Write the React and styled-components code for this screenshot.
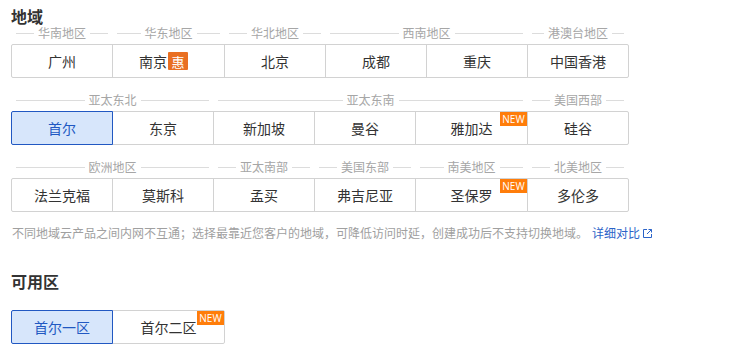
import React from 'react';
import styled, { createGlobalStyle, css } from 'styled-components';

const GlobalStyle = createGlobalStyle`
  body {
    margin: 0;
    background: #fff;
    font-family: "Noto Sans CJK SC", "Noto Sans", sans-serif;
    color: #333;
  }
`;

const Page = styled.div`
  padding: 5px 0 0 12px;
`;

const Title = styled.div`
  font-size: 16px;
  font-weight: 700;
  line-height: 22px;
  color: #333;
  margin-left: -1px;
`;

const RegionRow = styled.div`
  display: flex;
  margin-bottom: 16px;
`;

const Group = styled.div`
  display: flex;
  flex-direction: column;
`;

const GroupLabel = styled.div`
  display: flex;
  align-items: center;
  gap: 4px;
  height: 12px;
  line-height: 12px;
  padding: 0 5px 0 4px;
  margin-bottom: 5px;
  font-size: 12px;
  color: #a6a6a6;
  white-space: nowrap;

  &::before,
  &::after {
    content: '';
    flex: 1;
    border-top: 1px solid #dcdcdc;
  }
`;

const Cells = styled.div`
  display: flex;
`;

const Cell = styled.div`
  position: relative;
  box-sizing: border-box;
  width: ${(p) => p.$w}px;
  height: 34px;
  margin-left: -1px;
  display: flex;
  align-items: center;
  justify-content: center;
  font-size: 14px;
  color: #333;
  background: #fff;
  border: 1px solid #d2d2d2;
  ${(p) =>
    p.$active &&
    css`
      z-index: 1;
      background: #d7e6fb;
      border-color: #2158c2;
      color: #2158c2;
    `}
  ${(p) => p.$first && css`border-radius: 2px 0 0 2px;`}
  ${(p) => p.$last && css`border-radius: 0 2px 2px 0;`}
`;

const Hui = styled.span`
  display: inline-flex;
  align-items: center;
  justify-content: center;
  width: 20px;
  height: 18px;
  margin: 0 10px 0 1px;
  background: #e96f22;
  color: #fff;
  font-size: 13px;
  border-radius: 1px;
`;

const NewBadge = styled.span`
  position: absolute;
  top: 0;
  right: 0;
  width: 27px;
  height: 14px;
  background: #ff7d0a;
  color: #fff;
  font-family: "Open Sans", "Liberation Sans", sans-serif;
  font-size: 10px;
  line-height: 14px;
  text-align: center;
`;

const Note = styled.div`
  margin-top: -4px;
  font-size: 12px;
  line-height: 18px;
  color: #a0a0a0;
  display: flex;
  align-items: center;
`;

const Link = styled.a`
  margin-left: 4px;
  color: #2b63c8;
  text-decoration: none;
  display: inline-flex;
  align-items: center;
  gap: 3px;
`;

const SubTitle = styled(Title)`
  margin-top: 28px;
`;

const ZoneRow = styled(Cells)`
  margin-top: 18px;
`;

const rows = [
  [
    { label: '华南地区', cells: [{ name: '广州' }] },
    { label: '华东地区', cells: [{ name: '南京', hui: true }] },
    { label: '华北地区', cells: [{ name: '北京' }] },
    { label: '西南地区', cells: [{ name: '成都' }, { name: '重庆' }] },
    { label: '港澳台地区', cells: [{ name: '中国香港' }] },
  ],
  [
    { label: '亚太东北', cells: [{ name: '首尔', active: true }, { name: '东京' }] },
    {
      label: '亚太东南',
      cells: [{ name: '新加坡' }, { name: '曼谷' }, { name: '雅加达', isNew: true }],
    },
    { label: '美国西部', cells: [{ name: '硅谷' }] },
  ],
  [
    { label: '欧洲地区', cells: [{ name: '法兰克福' }, { name: '莫斯科' }] },
    { label: '亚太南部', cells: [{ name: '孟买' }] },
    { label: '美国东部', cells: [{ name: '弗吉尼亚' }] },
    { label: '南美地区', cells: [{ name: '圣保罗', isNew: true }] },
    { label: '北美地区', cells: [{ name: '多伦多' }] },
  ],
];

const ExternalIcon = () => (
  <svg width="9" height="9" viewBox="0 0 9 9" fill="none" stroke="#2b63c8" strokeWidth="1">
    <path d="M4 0.5H0.5V8.5H8.5V5" />
    <path d="M5.5 0.5H8.5V3.5" />
    <path d="M8.5 0.5L4 5" />
  </svg>
);

const RegionCell = ({ cell, first, last }) => (
  <Cell
    $w={cell.hui || cell.isNew ? 113 : 102}
    $active={cell.active}
    $first={first}
    $last={last}
  >
    {cell.name}
    {cell.hui && <Hui>惠</Hui>}
    {cell.isNew && <NewBadge>NEW</NewBadge>}
  </Cell>
);

const App = () => {
  return (
    <Page>
      <GlobalStyle />
      <Title>地域</Title>
      {rows.map((row, ri) => {
        const total = row.reduce((n, g) => n + g.cells.length, 0);
        let idx = 0;
        return (
          <RegionRow key={ri}>
            {row.map((g) => (
              <Group key={g.label}>
                <GroupLabel>{g.label}</GroupLabel>
                <Cells>
                  {g.cells.map((c) => {
                    const i = idx++;
                    return (
                      <RegionCell key={c.name} cell={c} first={i === 0} last={i === total - 1} />
                    );
                  })}
                </Cells>
              </Group>
            ))}
          </RegionRow>
        );
      })}
      <Note>
        不同地域云产品之间内网不互通；选择最靠近您客户的地域，可降低访问时延，创建成功后不支持切换地域。
        <Link href="#">
          详细对比
          <ExternalIcon />
        </Link>
      </Note>
      <SubTitle>可用区</SubTitle>
      <ZoneRow>
        <RegionCell cell={{ name: '首尔一区', active: true }} first />
        <RegionCell cell={{ name: '首尔二区', isNew: true }} last />
      </ZoneRow>
    </Page>
  );
};

export default App;
